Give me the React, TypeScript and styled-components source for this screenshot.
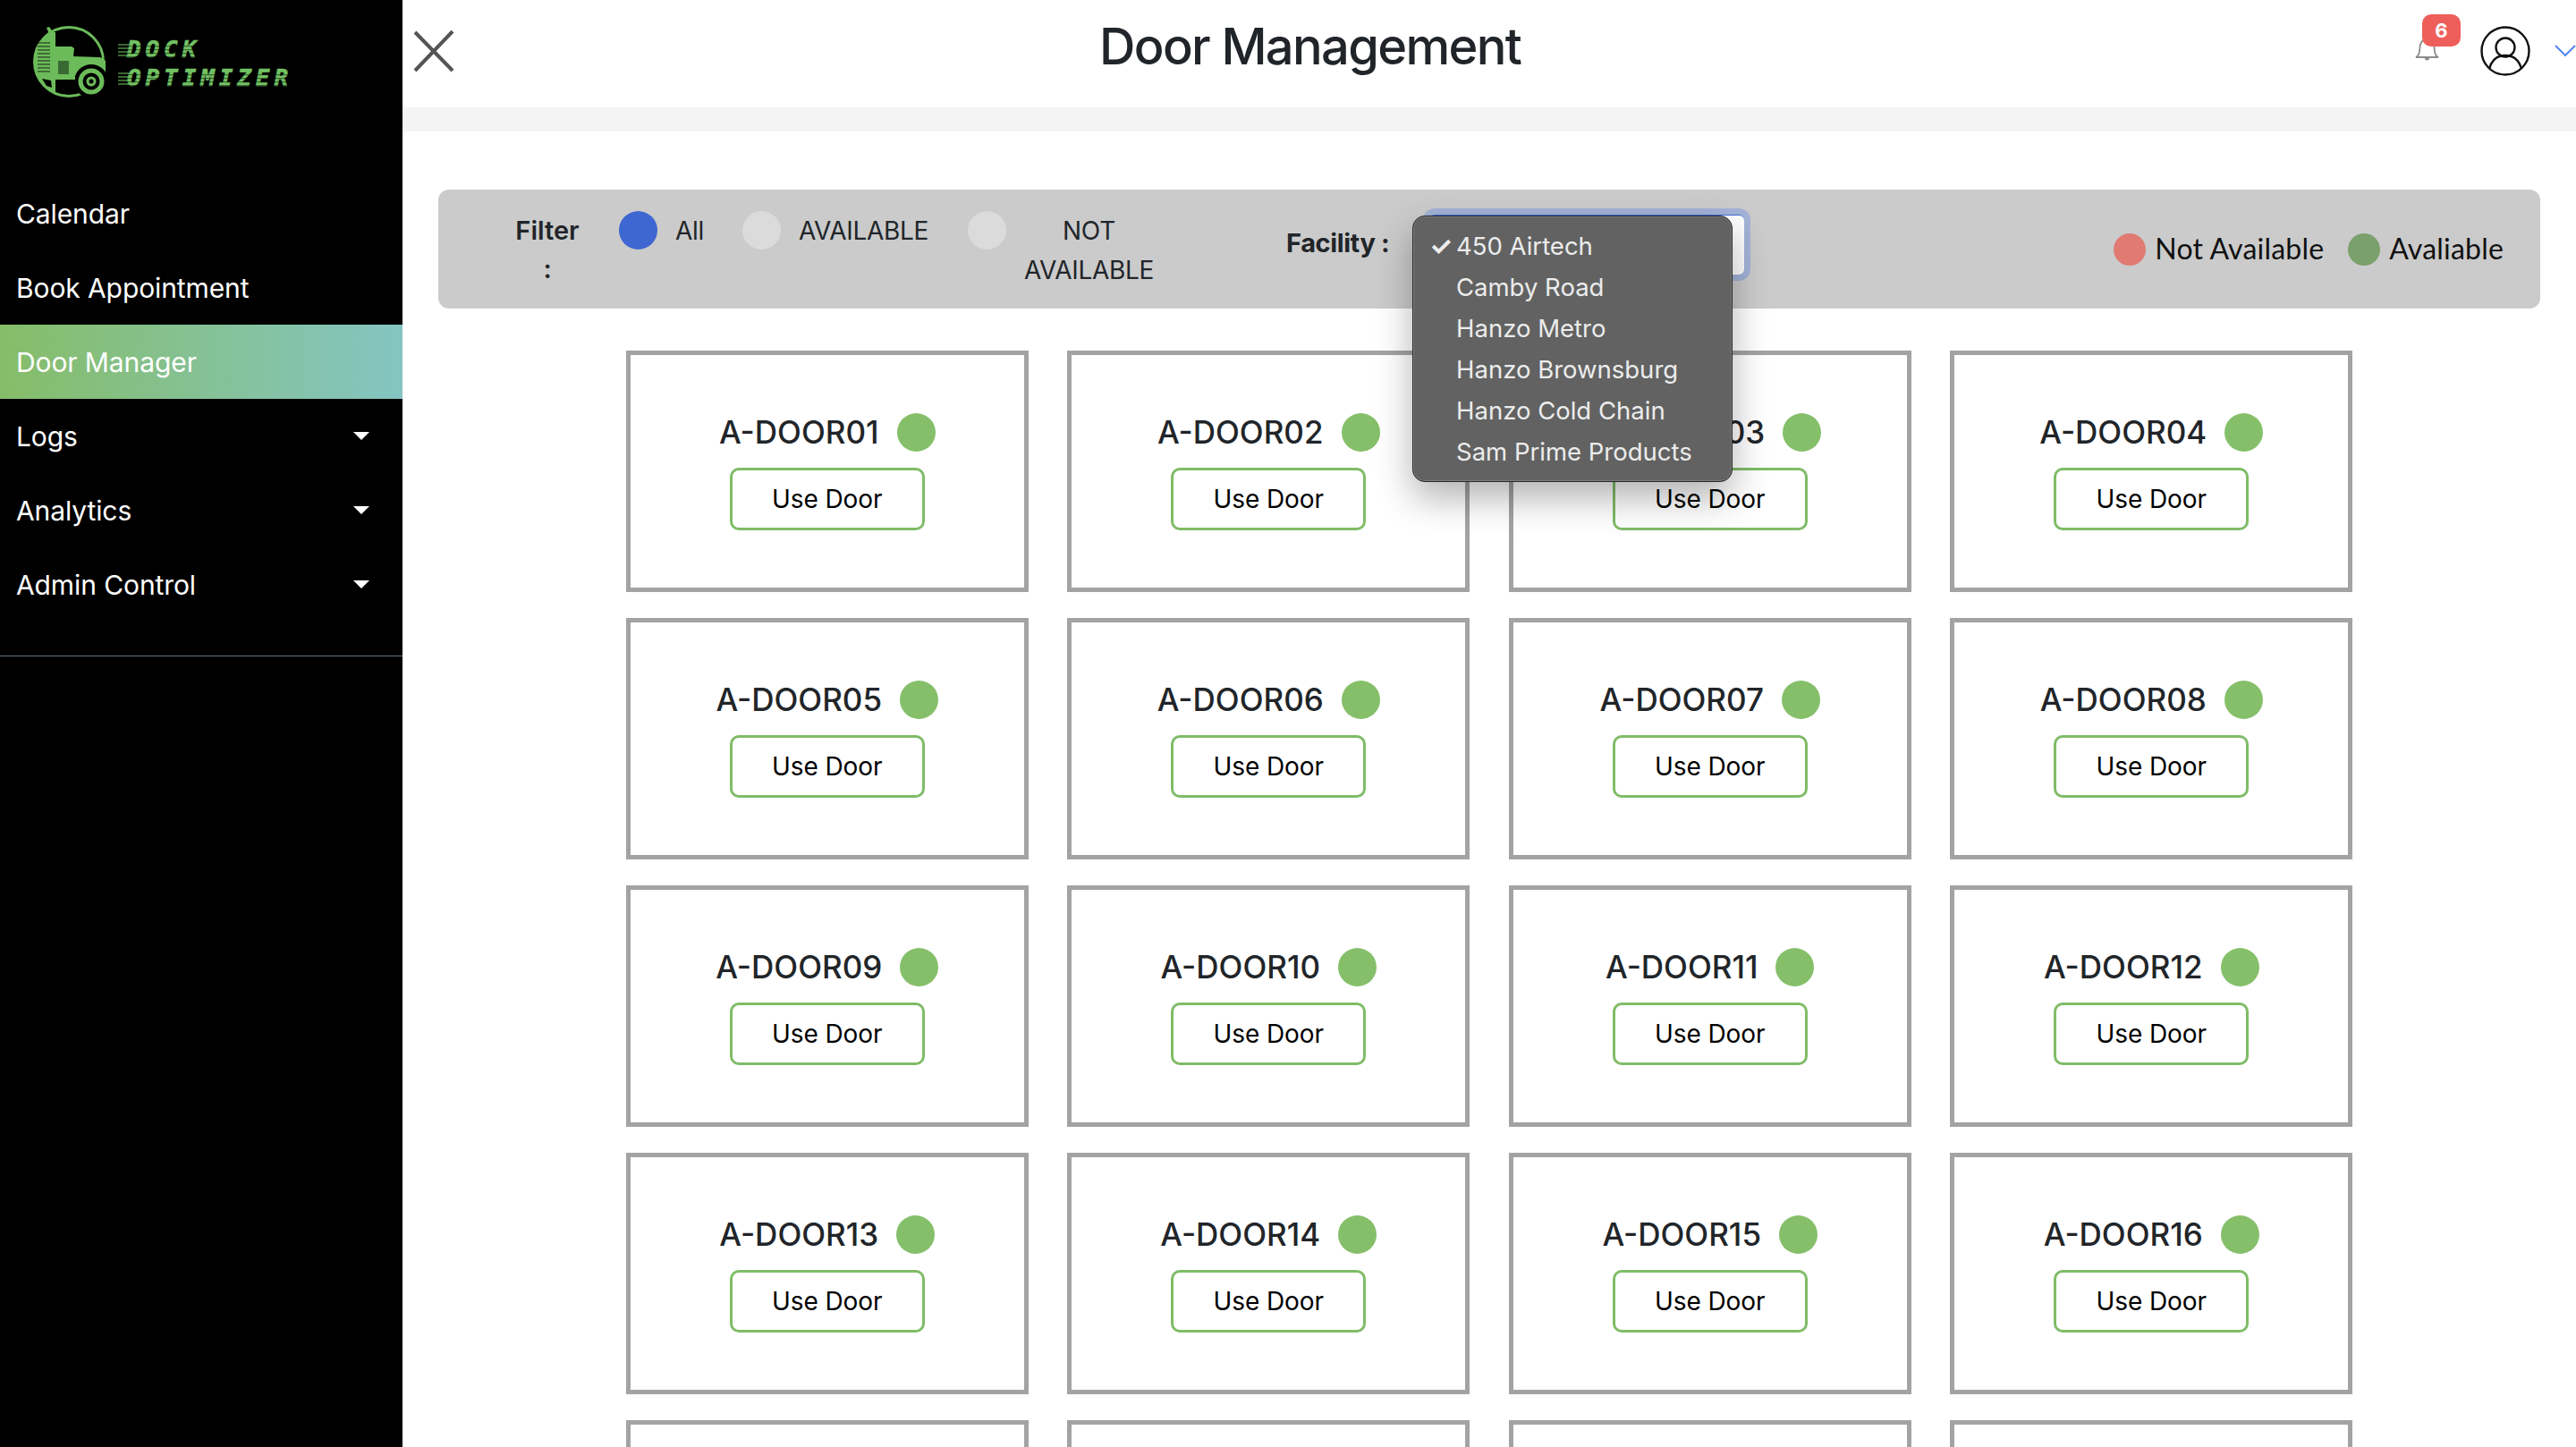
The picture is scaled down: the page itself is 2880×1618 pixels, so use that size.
import React from 'react';
import styled, { createGlobalStyle } from 'styled-components';

const GlobalStyle = createGlobalStyle`
  html, body {
    margin: 0;
    padding: 0;
    height: 100%;
    overflow: hidden;
    background: #fff;
  }
  * {
    box-sizing: border-box;
  }
  body {
    font-family: Inter, "Liberation Sans", sans-serif;
    color: #212529;
  }
`;

const Page = styled.div`
  display: flex;
  width: 2880px;
  height: 1618px;
  overflow: hidden;
`;

const Sidebar = styled.aside`
  flex: 0 0 450px;
  background: #000;
  color: #fff;
`;

const LogoBox = styled.div`
  height: 197px;
  padding: 26px 0 0 36px;
`;

const Nav = styled.nav`
  padding-bottom: 38px;
  border-bottom: 1px solid #5f7180;
`;

const NavItem = styled.div<{ $active?: boolean }>`
  display: flex;
  align-items: center;
  justify-content: space-between;
  height: 83px;
  padding: 0 37px 0 18px;
  font-size: 30px;
  letter-spacing: -0.1px;
  color: #fff;
  background: ${p =>
    p.$active ? 'linear-gradient(90deg, #86bd68 0%, #84c5c2 100%)' : 'transparent'};
`;

const Caret = styled.span`
  width: 0;
  height: 0;
  border-left: 9px solid transparent;
  border-right: 9px solid transparent;
  border-top: 9px solid #fff;
`;

const Main = styled.main`
  flex: 1;
  min-width: 0;
  display: flex;
  flex-direction: column;
`;

const Header = styled.header`
  display: flex;
  align-items: flex-start;
  height: 120px;
  padding-left: 12px;
  flex: none;
`;

const CloseButton = styled.div`
  margin-top: 34px;
  width: 46px;
  height: 47px;
  flex: none;
`;

const Title = styled.h1`
  margin: 20px 0 0 721px;
  font-size: 56px;
  line-height: 64px;
  font-weight: 500;
  letter-spacing: -1.65px;
  color: #212529;
  white-space: nowrap;
`;

const HeaderRight = styled.div`
  margin-left: auto;
  display: flex;
  align-items: flex-start;
`;

const BellWrap = styled.div`
  position: relative;
  width: 50px;
  height: 70px;
  margin-right: 22px;
`;

const Badge = styled.span`
  position: absolute;
  left: 8px;
  top: 16px;
  width: 43px;
  height: 36px;
  border-radius: 10px;
  background: #ee5f5b;
  color: #fff;
  font-size: 22px;
  font-weight: 700;
  line-height: 36px;
  text-align: center;
`;

const Band = styled.div`
  flex: none;
  height: 27px;
  background: #f4f4f4;
`;

const Content = styled.div`
  flex: 1;
  padding: 65px 40px 0;
`;

const FilterBar = styled.section`
  display: flex;
  align-items: flex-start;
  height: 133px;
  padding: 24px 41px 0 79px;
  background: #cbcbcb;
  border-radius: 12px;
  font-size: 28px;
  letter-spacing: -0.3px;
  line-height: 43px;
`;

const FilterLabel = styled.div`
  width: 86px;
  font-size: 29px;
  letter-spacing: 0;
  font-weight: 600;
  text-align: center;
  margin-right: 37px;
`;

const RadioDot = styled.span<{ $on?: boolean }>`
  flex: none;
  width: 43px;
  height: 43px;
  border-radius: 50%;
  background: ${p => (p.$on ? '#3e67d2' : '#dbdbdb')};
  margin-right: 20px;
`;

const RadioText = styled.span<{ $w: number; $mr: number }>`
  width: ${p => p.$w}px;
  margin-right: ${p => p.$mr}px;
  line-height: 44px;
  text-align: center;
`;

const FacilityLabel = styled.div`
  display: flex;
  align-items: center;
  height: 67px;
  margin-top: 2px;
  width: 114px;
  font-size: 29px;
  font-weight: 700;
  letter-spacing: -0.4px;
  white-space: nowrap;
`;

const SelectWrap = styled.div`
  position: relative;
  width: 352px;
  height: 67px;
  margin: 4px 0 0 46px;
  flex: none;
`;

const SelectBox = styled.div`
  width: 100%;
  height: 100%;
  background: #fff;
  border-radius: 6px;
  border-top: 1px solid #3d6bd6;
  box-shadow: 0 0 0 7px #a3b3d8;
`;

const DropMenu = styled.ul`
  position: absolute;
  left: -19px;
  top: 1px;
  width: 358px;
  height: 298px;
  margin: 0;
  padding: 10px 0 0;
  list-style: none;
  background: #626262;
  border: 1px solid #2a2a2a;
  border-radius: 14px;
  box-shadow: inset 0 0 0 1px #7c7c7c, 0 18px 40px rgba(0, 0, 0, 0.3);
  color: #ececec;
  font-size: 27.5px;
  letter-spacing: 0;
`;

const DropItem = styled.li`
  position: relative;
  height: 46px;
  line-height: 46px;
  padding-left: 48px;
  white-space: nowrap;
`;

const Check = styled.span`
  position: absolute;
  left: 18px;
  top: 0;
  font-size: 29px;
  font-weight: 700;
`;

const Legend = styled.div`
  display: flex;
  align-items: center;
  margin-left: auto;
  align-self: center;
  margin-top: -24px;
  font-family: Lato, Inter, sans-serif;
  font-size: 32px;
  letter-spacing: 0.2px;
  color: #111;
`;

const LegendDot = styled.span<{ $color: string }>`
  width: 36px;
  height: 36px;
  border-radius: 50%;
  background: ${p => p.$color};
  margin-right: 10px;
`;

const LegendText = styled.span<{ $mr?: number }>`
  margin-right: ${p => p.$mr || 0}px;
  padding-bottom: 3px;
`;

const DoorGrid = styled.div`
  display: grid;
  grid-template-columns: repeat(4, 450px);
  grid-auto-rows: 270px;
  column-gap: 43.5px;
  row-gap: 29px;
  justify-content: center;
  margin-top: 47px;
`;

const DoorCard = styled.div`
  border: 5px solid #a3a3a3;
  display: flex;
  flex-direction: column;
  align-items: center;
  padding-top: 64px;
`;

const DoorTitle = styled.div`
  display: flex;
  align-items: center;
  gap: 20px;
  height: 44px;
  font-size: 35px;
  font-weight: 500;
  color: #212529;
`;

const StatusDot = styled.span`
  width: 43px;
  height: 43px;
  border-radius: 50%;
  background: #85bf6a;
`;

const UseDoor = styled.button`
  width: 218px;
  height: 70px;
  margin-top: 18px;
  padding: 0;
  background: #fff;
  border: 3px solid #7fbc67;
  border-radius: 10px;
  font-family: inherit;
  font-size: 28px;
  letter-spacing: -0.1px;
  color: #000;
`;

const LogoLabel = styled.text`
  font-family: "DejaVu Sans Mono", monospace;
  font-weight: 700;
  font-style: italic;
  font-size: 26px;
  letter-spacing: 4.9px;
  fill: #72c162;
  stroke: #72c162;
  stroke-width: 0.6px;
`;

const navItems = [
  { label: 'Calendar' },
  { label: 'Book Appointment' },
  { label: 'Door Manager', active: true },
  { label: 'Logs', caret: true },
  { label: 'Analytics', caret: true },
  { label: 'Admin Control', caret: true },
];

const facilities = [
  '450 Airtech',
  'Camby Road',
  'Hanzo Metro',
  'Hanzo Brownsburg',
  'Hanzo Cold Chain',
  'Sam Prime Products',
];

const doors = Array.from({ length: 20 }, (_, i) => `A-DOOR${String(i + 1).padStart(2, '0')}`);

function Logo() {
  const green = '#6cbb5a';
  const streaks = [49, 53, 57, 61, 81, 85, 89, 93];
  const hatch = [47, 51, 55, 59, 63, 67, 71, 75, 79];
  return (
    <svg width="300" height="90" viewBox="0 0 300 90">
      <g transform="translate(-36 -26)">
        <circle cx="77" cy="69" r="38.500" fill="none" stroke={green} strokeWidth="3" />
        <path d="M57 36 A39.500 39.500 0 0 0 62 105 L62 36 Z" fill={green} />
        <path d="M52 31 L55 30 L62 40 L62 99 L57 99 L57 43 Z" fill={green} />
        {hatch.map(y => (
          <rect key={y} x="42" y={y} width="14" height="1.800" fill="#000" opacity="0.45" />
        ))}
        <path d="M47 88 L57 90 L58 98 L52 96 Z" fill="#000" />
        <path d="M62 52 H80 L83 54 L82 63 L112 64 L118 68 V86 H62 Z" fill={green} />
        <rect x="65" y="68" width="12" height="15" fill="#3a6a33" />
        <circle cx="102" cy="91" r="19" fill="#000" />
        <path d="M62 86 H84 V89 H62 Z" fill={green} />
        <circle cx="102" cy="91" r="12" fill="#000" stroke={green} strokeWidth="5" />
        <circle cx="102" cy="91" r="4" fill="#000" stroke={green} strokeWidth="3" />
        <LogoLabel x="142" y="64">DOCK</LogoLabel>
        <LogoLabel x="142" y="96">OPTIMIZER</LogoLabel>
        {streaks.map(y => (
          <g key={y}>
            <rect x="132" y={y} width="12" height="2" fill={green} opacity="0.55" />
            <rect x="142" y={y + 2} width="186" height="1.200" fill="#000" opacity="0.45" />
          </g>
        ))}
      </g>
    </svg>
  );
}

function CloseIcon() {
  return (
    <svg width="46" height="47" viewBox="0 0 46 47">
      <path d="M2 2 L44 45 M44 1 L2 45" stroke="#555" strokeWidth="4" fill="none" />
    </svg>
  );
}

function BellIcon() {
  return (
    <svg width="27" height="28" viewBox="0 0 27 28" style={{ position: 'absolute', left: 0, top: 42 }}>
      <path
        d="M1 22 C5 20 5 16 5.500 11 C6 5 9 2 13.500 2 C18 2 21 5 21.500 11 C22 16 22 20 26 22 Z"
        fill="none"
        stroke="#8c8c8c"
        strokeWidth="1.800"
      />
      <path d="M11 23 A2.500 2.500 0 0 0 16 23 Z" fill="#8c8c8c" />
    </svg>
  );
}

function UserIcon() {
  return (
    <svg width="58" height="58" viewBox="0 0 58 58" style={{ marginTop: 28, flex: 'none' }}>
      <circle cx="29" cy="29" r="26.500" fill="none" stroke="#111" strokeWidth="2.400" />
      <circle cx="29" cy="25" r="10.500" fill="none" stroke="#111" strokeWidth="2.400" />
      <path d="M11 49 C14 38 21 34 29 34 C37 34 44 38 47 49" fill="none" stroke="#111" strokeWidth="2.400" />
    </svg>
  );
}

function ChevronIcon() {
  return (
    <svg width="24" height="13" viewBox="0 0 24 13" style={{ margin: '50px 0 0 26px', flex: 'none' }}>
      <path d="M1 1 L12 12 L23 1" fill="none" stroke="#4a7ff0" strokeWidth="1.800" />
    </svg>
  );
}

export default function App() {
  return (
    <Page>
      <GlobalStyle />
      <Sidebar>
        <LogoBox>
          <Logo />
        </LogoBox>
        <Nav>
          {navItems.map(item => (
            <NavItem key={item.label} $active={item.active}>
              {item.label}
              {item.caret && <Caret />}
            </NavItem>
          ))}
        </Nav>
      </Sidebar>
      <Main>
        <Header>
          <CloseButton>
            <CloseIcon />
          </CloseButton>
          <Title>Door Management</Title>
          <HeaderRight>
            <BellWrap>
              <BellIcon />
              <Badge>6</Badge>
            </BellWrap>
            <UserIcon />
            <ChevronIcon />
          </HeaderRight>
        </Header>
        <Band />
        <Content>
          <FilterBar>
            <FilterLabel>Filter :</FilterLabel>
            <RadioDot $on />
            <RadioText $w={31} $mr={44}>All</RadioText>
            <RadioDot />
            <RadioText $w={144} $mr={45}>AVAILABLE</RadioText>
            <RadioDot />
            <RadioText $w={145} $mr={148}>NOT AVAILABLE</RadioText>
            <FacilityLabel>Facility :</FacilityLabel>
            <SelectWrap>
              <SelectBox />
              <DropMenu>
                {facilities.map((f, i) => (
                  <DropItem key={f}>
                    {i === 0 && <Check>✓</Check>}
                    {f}
                  </DropItem>
                ))}
              </DropMenu>
            </SelectWrap>
            <Legend>
              <LegendDot $color="#e07a72" />
              <LegendText $mr={27}>Not Available</LegendText>
              <LegendDot $color="#7aa06c" />
              <LegendText>Avaliable</LegendText>
            </Legend>
          </FilterBar>
          <DoorGrid>
            {doors.map(d => (
              <DoorCard key={d}>
                <DoorTitle>
                  {d}
                  <StatusDot />
                </DoorTitle>
                <UseDoor>Use Door</UseDoor>
              </DoorCard>
            ))}
          </DoorGrid>
        </Content>
      </Main>
    </Page>
  );
}
